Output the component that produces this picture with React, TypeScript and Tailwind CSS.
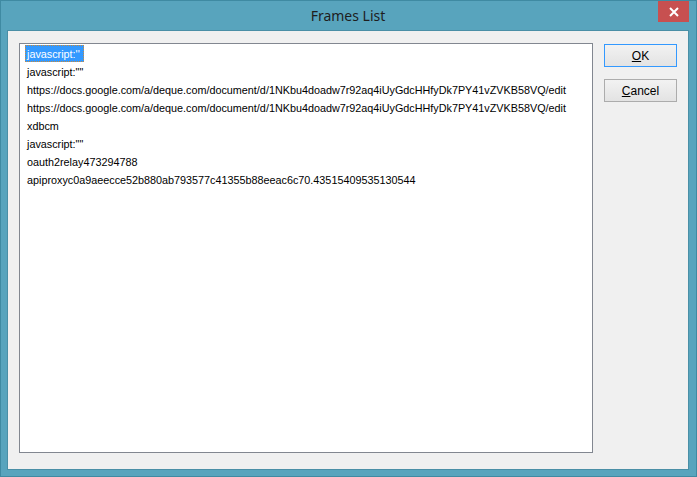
import React from 'react';

const frames = [
  'javascript:\'\'',
  'javascript:""',
  'https://docs.google.com/a/deque.com/document/d/1NKbu4doadw7r92aq4iUyGdcHHfyDk7PY41vZVKB58VQ/edit',
  'https://docs.google.com/a/deque.com/document/d/1NKbu4doadw7r92aq4iUyGdcHHfyDk7PY41vZVKB58VQ/edit',
  'xdbcm',
  'javascript:""',
  'oauth2relay473294788',
  'apiproxyc0a9aeecce52b880ab793577c41355b88eeac6c70.43515409535130544',
];

const App: React.FC = () => {
  return (
    <div className="relative w-[697px] h-[477px] bg-[#58a4bd] border border-[#3f8aa2] flex flex-col pl-[6px] pr-[7px] pb-[6px] select-none">
      <div className="h-[29px] shrink-0 flex items-center justify-center">
        <span className="text-[14px] text-[#1e1e1e] leading-none" style={{ fontFamily: '"Noto Sans", sans-serif' }}>
          Frames List
        </span>
      </div>
      <button className="absolute top-[0px] right-[7px] w-[31px] h-[21px] bg-[#c75050] flex items-center justify-center">
        <svg width="10" height="10" viewBox="0 0 10 10">
          <path d="M1 1 L9 9 M9 1 L1 9" stroke="#fff" strokeWidth="2" />
        </svg>
      </button>
      <div className="flex-1 border border-[#4a8fa6] bg-[#f0f0f0] flex pt-[12px] pl-[11px] pr-[10px] pb-[16px]" style={{ fontFamily: '"Liberation Sans", Arial, sans-serif' }}>
        <div className="w-[574px] h-[410px] border border-[#828790] bg-white py-[1px] pl-[5px] text-[10.8px] text-black overflow-hidden">
          {frames.map((f, i) => (
            <div key={i} className="h-[18px] flex items-start">
              <span
                className={
                  i === 0
                    ? 'h-[17px] leading-[16px] pl-[1px] pr-[3px] border border-dotted border-[#c98a3a] bg-[#3399ff] text-white whitespace-nowrap'
                    : 'h-[17px] leading-[16px] px-[1px] border border-transparent whitespace-nowrap'
                }
              >
                {f}
              </span>
            </div>
          ))}
        </div>
        <div className="ml-[11px] flex flex-col gap-[12px] pt-[1px]">
          <button className="w-[73px] h-[23px] border border-[#3399ff] bg-gradient-to-b from-[#f2f2f2] to-[#e3e3e3] text-[12px] text-black">
            <span className="underline">O</span>K
          </button>
          <button className="w-[73px] h-[23px] border border-[#acacac] bg-gradient-to-b from-[#f2f2f2] to-[#e3e3e3] text-[12px] text-black">
            <span className="underline">C</span>ancel
          </button>
        </div>
      </div>
    </div>
  );
};

export default App;
